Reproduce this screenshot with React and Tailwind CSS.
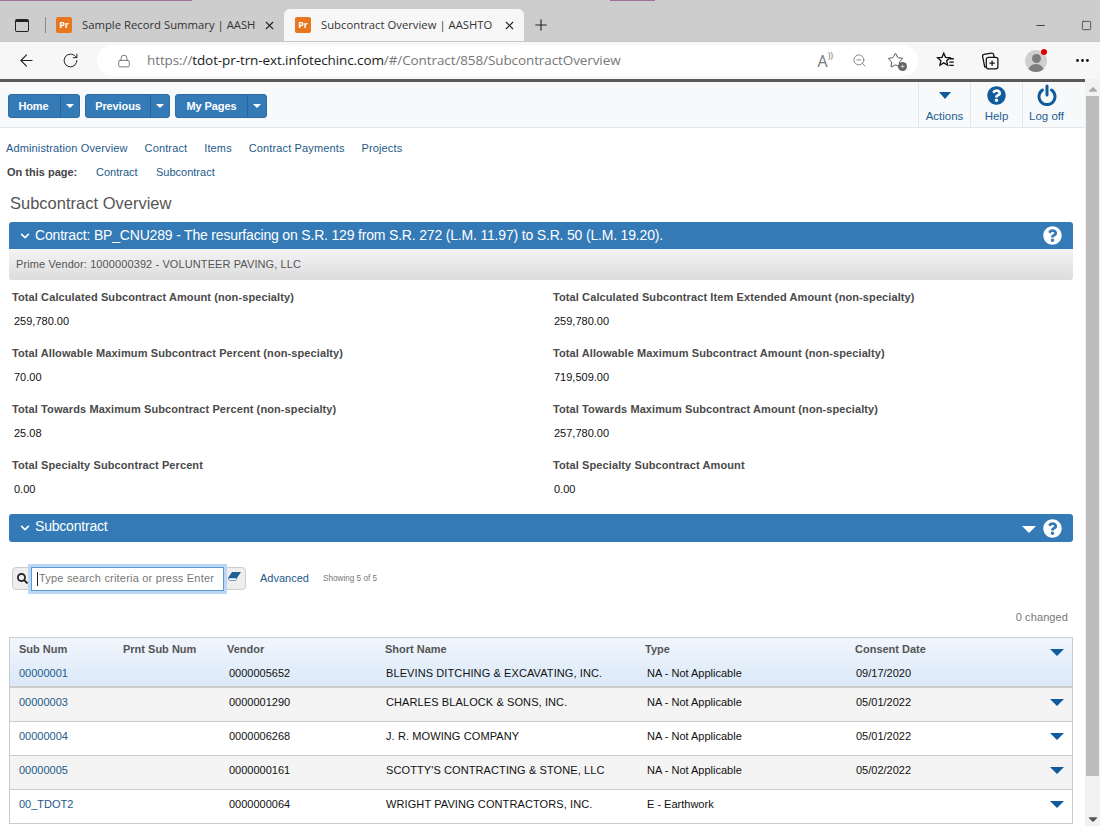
import { ArrowLeft, RotateCw, Lock, ZoomOut, Plus, X, Minus, Square, Star, MoreHorizontal } from "lucide-react";
import { FaQuestionCircle, FaSearch, FaChevronDown, FaCaretDown, FaCaretUp } from "react-icons/fa";

const stats = [
  ["Total Calculated Subcontract Amount (non-specialty)", "259,780.00", "Total Calculated Subcontract Item Extended Amount (non-specialty)", "259,780.00"],
  ["Total Allowable Maximum Subcontract Percent (non-specialty)", "70.00", "Total Allowable Maximum Subcontract Amount (non-specialty)", "719,509.00"],
  ["Total Towards Maximum Subcontract Percent (non-specialty)", "25.08", "Total Towards Maximum Subcontract Amount (non-specialty)", "257,780.00"],
  ["Total Specialty Subcontract Percent", "0.00", "Total Specialty Subcontract Amount", "0.00"],
];

const rows = [
  ["00000003", "0000001290", "CHARLES BLALOCK & SONS, INC.", "NA - Not Applicable", "05/01/2022"],
  ["00000004", "0000006268", "J. R. MOWING COMPANY", "NA - Not Applicable", "05/01/2022"],
  ["00000005", "0000000161", "SCOTTY'S CONTRACTING & STONE, LLC", "NA - Not Applicable", "05/02/2022"],
  ["00_TDOT2", "0000000064", "WRIGHT PAVING CONTRACTORS, INC.", "E - Earthwork", ""],
];

const cols = "grid grid-cols-[104px_104px_158px_260px_210px_1fr_28px]";

const Favicon = () => (
  <div className="w-[16px] h-[16px] shrink-0 rounded-[2px] bg-[#e8751f] text-white text-[9px] font-bold flex items-center justify-center">Pr</div>
);

const SplitButton = ({ label, width }) => (
  <div className="flex h-[24px] rounded-[3px] bg-[#337ab7] border border-[#2e6da4] text-white text-[11px] font-bold tracking-[-0.1px]">
    <div className={`${width} flex items-center justify-center`}>{label}</div>
    <div className="w-[19px] border-l border-[#2a6496] flex items-center justify-center">
      <div className="w-0 h-0 border-x-[4px] border-x-transparent border-t-[4px] border-t-white" />
    </div>
  </div>
);

const Stat = ({ label, value, indent = "pl-[2px]" }) => (
  <div className="h-[56px]">
    <div className="h-[24px] flex items-center font-bold text-[#4a4a4a] tracking-[0.1px]">{label}</div>
    <div className={`h-[24px] flex items-center text-[#111] ${indent}`}>{value}</div>
  </div>
);

const RowArrow = ({ className = "" }) => (
  <div className={`w-0 h-0 ml-[6px] border-x-[7px] border-x-transparent border-t-[7px] border-t-[#0f5b9c] ${className}`} />
);

const App = () => {
  return (
    <div className="w-[1100px] h-[826px] overflow-hidden flex flex-col bg-white text-[11px]" style={{ fontFamily: '"Liberation Sans", Arial, sans-serif' }}>
      {/* browser tabs */}
      <div className="h-[41px] bg-[#cdcdcd] flex flex-col shrink-0">
        <div className="h-px flex">
          <div className="w-[192px] bg-[#a0719a]" />
          <div className="w-[418px]" />
          <div className="w-[45px] bg-[#a0719a]" />
        </div>
        <div className="flex flex-1 items-end" style={{ fontFamily: '"Open Sans", sans-serif' }}>
          <div className="w-[15px] h-[32px]" />
          <div className="h-[32px] w-[30px] flex items-center">
            <div className="w-[14px] h-[13px] border-[1.5px] border-[#222] rounded-[2px] border-t-[3px]" />
          </div>
          <div className="h-[16px] w-px bg-[#888] mb-[8px] mr-[10px]" />
          <div className="w-[228px] h-[32px] flex items-center gap-[10px] text-[11.3px] text-[#333]">
            <Favicon />
            <span className="w-[174px] whitespace-nowrap">Sample Record Summary | AASH</span>
            <X size={13} strokeWidth={2} className="text-[#222] ml-[-3.5px] shrink-0" />
          </div>
          <div className="w-[240px] h-[32px] bg-[#f7f7f7] rounded-t-[6px] flex items-center gap-[10px] pl-[11px] text-[11.3px] text-[#333]">
            <Favicon />
            <span className="w-[173px] whitespace-nowrap">Subcontract Overview | AASHTO</span>
            <X size={13} strokeWidth={2} className="text-[#222] ml-[-1.5px] shrink-0" />
          </div>
          <div className="h-[32px] w-[34px] flex items-center justify-center">
            <Plus size={18} strokeWidth={1.5} className="text-[#222]" />
          </div>
          <div className="flex-1" />
          <div className="h-[32px] w-[66px] flex items-center gap-[34px] text-[#222]">
            <Minus size={13} strokeWidth={1.5} />
            <Square size={11} strokeWidth={1.5} />
          </div>
        </div>
      </div>

      {/* address bar */}
      <div className="h-[38px] bg-[#f7f7f7] flex items-center shrink-0 border-t border-[#c8c8c8]">
        <div className="w-[52px] flex justify-center"><ArrowLeft size={19} strokeWidth={1.4} className="text-[#222]" /></div>
        <div className="w-[36px] flex justify-center"><RotateCw size={17} strokeWidth={1.4} className="text-[#222]" /></div>
        <div className="ml-[9px] w-[821px] h-[31px] bg-white rounded-full flex items-center pl-[20px] text-[13.5px] text-[#777]" style={{ fontFamily: '"Open Sans", sans-serif' }}>
          <Lock size={14} strokeWidth={1.3} className="text-[#555]" />
          <span className="ml-[16px] whitespace-nowrap tracking-[-0.1px]">https://<span className="text-[#222]">tdot-pr-trn-ext.infotechinc.com</span>/#/Contract/858/SubcontractOverview</span>
          <div className="flex-1" />
          <span className="text-[16px] text-[#777] mr-[19px]">A<span className="text-[9px] align-top">))</span></span>
          <ZoomOut size={15} strokeWidth={1.2} className="text-[#666] mr-[20px]" />
          <div className="relative mr-[14px]">
            <Star size={17} strokeWidth={1.3} className="text-[#444]" />
            <div className="absolute right-[-3px] bottom-[-2px] w-[9px] h-[9px] rounded-full bg-[#666] text-white text-[8px] leading-[8px] text-center">+</div>
          </div>
        </div>
        <div className="w-[52px] flex justify-center ml-[2px]">
          <svg width="20" height="20" viewBox="0 0 18 18" fill="none" stroke="#111" strokeWidth="1.2">
            <path d="M7 2l1.600 3.700 4 .4-3 2.700.9 4-3.500-2.100-3.500 2.100.9-4-3-2.700 4-.4z" />
            <path d="M12 7h4M12 10h4M12 13h4" />
          </svg>
        </div>
        <div className="w-[36px] flex justify-center">
          <svg width="19" height="19" viewBox="0 0 18 18" fill="none" stroke="#111" strokeWidth="1.2">
            <rect x="5" y="6" width="11" height="11" rx="2" />
            <path d="M10.500 9v5M8 11.500h5M5 15H3.500L1.500 5q-.2-1.500 1.300-1.800L10 2q1.500-.2 2 1.500L12.500 6" />
          </svg>
        </div>
        <div className="w-[56px] flex justify-center">
          <div className="relative w-[22px] h-[22px]">
            <div className="w-[22px] h-[22px] rounded-full bg-[#cfcfcf] flex flex-col items-center overflow-hidden">
              <div className="w-[9px] h-[9px] rounded-full bg-[#7d7d7d] mt-[4px] shrink-0" />
              <div className="w-[16px] h-[10px] rounded-t-full bg-[#7d7d7d] mt-[1px] shrink-0" />
            </div>
            <div className="absolute right-[0px] top-[-1px] w-[6px] h-[6px] rounded-full bg-[#e00000]" />
          </div>
        </div>
        <div className="flex-1 flex justify-center"><MoreHorizontal size={17} strokeWidth={2} className="text-[#111]" /></div>
      </div>

      <div className="h-[3px] flex shrink-0">
        <div className="w-[1085px] bg-[#5a5a5a]" />
        <div className="flex-1 bg-[#f1f1f1]" />
      </div>

      <div className="flex flex-1 min-h-0">
        {/* page */}
        <div className="w-[1085px] flex flex-col overflow-hidden">
          <div className="h-[46px] shrink-0 bg-[#f7f9fb] border-b border-[#e3e6ea] flex">
            <div className="flex-1 flex items-start gap-[5px] pl-[8px] pt-[12px]">
              <SplitButton label="Home" width="w-[51px] pr-[2px]" />
              <SplitButton label="Previous" width="w-[64px]" />
              <SplitButton label="My Pages" width="w-[71px]" />
            </div>
            <div className="w-[52px] border-l border-[#e3e6ea] flex flex-col items-center text-[#1f5f94] text-[11.5px]">
              <div className="h-[26px] pt-[1px] flex items-center"><div className="w-0 h-0 border-x-[6px] border-x-transparent border-t-[7px] border-t-[#0f5b9c]" /></div>
              <span>Actions</span>
            </div>
            <div className="w-[52px] border-l border-[#e3e6ea] flex flex-col items-center text-[#1f5f94] text-[11.5px]">
              <div className="h-[26px] pt-[1px] flex items-center"><FaQuestionCircle size={19} className="text-[#0f5b9c]" /></div>
              <span>Help</span>
            </div>
            <div className="w-[63px] pr-[15px] border-l border-[#e3e6ea] flex flex-col items-center text-[#1f5f94] text-[11.5px]">
              <div className="h-[26px] flex items-center">
                <svg width="20" height="22" viewBox="0 0 20 22" fill="none" stroke="#0f5b9c" strokeWidth="3" strokeLinecap="round">
                  <path d="M10 2v9M5.500 6a8 8 0 1 0 9 0" />
                </svg>
              </div>
              <span>Log off</span>
            </div>
          </div>

          <div className="h-[37px] shrink-0 flex items-end pb-[9px] pl-[6px] gap-[17px] text-[#1d5a8a] tracking-[0.13px]">
            <span>Administration Overview</span>
            <span>Contract</span>
            <span>Items</span>
            <span>Contract Payments</span>
            <span>Projects</span>
          </div>
          <div className="h-[14px] shrink-0 flex items-center pl-[7px] text-[#1d5a8a]">
            <span className="w-[89px] font-bold text-[#444]">On this page:</span>
            <span className="w-[60px]">Contract</span>
            <span>Subcontract</span>
          </div>

          <div className="h-[43px] shrink-0 pl-[10px] pt-[14px] text-[16.5px] text-[#555] leading-[20px]">Subcontract Overview</div>

          <div className="ml-[9px] w-[1064px] shrink-0">
            <div className="h-[27px] bg-[#337ab7] rounded-t-[3px] flex items-center pl-[11px] pr-[11px] text-white text-[14px]">
              <FaChevronDown size={10} className="mr-[5px]" />
              <span className="flex-1 whitespace-nowrap tracking-[-0.18px]">Contract: BP_CNU289 - The resurfacing on S.R. 129 from S.R. 272 (L.M. 11.97) to S.R. 50 (L.M. 19.20).</span>
              <FaQuestionCircle size={19} />
            </div>
            <div className="h-[31px] pb-[1px] bg-gradient-to-b from-[#f4f4f4] to-[#dcdcdc] rounded-b-[3px] flex items-center pl-[7px] text-[#555] tracking-[0.1px]">
              Prime Vendor: 1000000392 - VOLUNTEER PAVING, LLC
            </div>
          </div>

          <div className="shrink-0 pl-[12px] pt-[5px] grid grid-cols-[541px_1fr]">
            {stats.map((s) => (
              <div key={s[0]} className="contents">
                <Stat label={s[0]} value={s[1]} />
                <Stat label={s[2]} value={s[3]} indent="pl-px" />
              </div>
            ))}
          </div>

          <div className="mt-[5px] ml-[9px] w-[1064px] h-[28px] shrink-0 bg-[#337ab7] rounded-[3px] flex items-center pl-[11px] pr-[11px] text-white text-[14px]">
            <FaChevronDown size={10} className="mr-[5px]" />
            <span className="flex-1 tracking-[-0.2px] pb-[3px]">Subcontract</span>
            <div className="w-0 h-0 mr-[7px] mt-[2px] border-x-[7px] border-x-transparent border-t-[7px] border-t-white" />
            <FaQuestionCircle size={19} />
          </div>

          <div className="mt-[25px] h-[23px] shrink-0 flex items-center pl-[12px]">
            <div className="w-[234px] h-[23px] bg-[#eee] border border-[#ccc] rounded-[4px] flex items-center">
              <div className="w-[18px] flex justify-center"><FaSearch size={11} className="text-[#222]" /></div>
              <div className="w-[193px] h-[24px] bg-white border border-[#5b9bd5] shadow-[0_0_0_3px_#bcd6f5] flex items-center pl-[5px] text-[#777]">
                <span className="w-px h-[14px] bg-[#222] mr-[1px]" />
                <span className="tracking-[0.2px] whitespace-nowrap">Type search criteria or press Enter</span>
              </div>
              <div className="flex-1 flex justify-center pb-[5px]">
                <svg width="13" height="9" viewBox="0 0 13 9">
                  <path d="M4 0h9L9 6H0z" fill="#1f5f94" />
                  <path d="M0 6h9l-1.500 2.500H1.500z" fill="#fff" stroke="#1f5f94" strokeWidth="0.6" />
                </svg>
              </div>
            </div>
            <span className="ml-[14px] text-[#1d5a8a]">Advanced</span>
            <span className="ml-[14px] text-[8.2px] text-[#777] pt-[2px]">Showing 5 of 5</span>
          </div>

          <div className="h-[47px] shrink-0 pr-[17px] pt-[19px] text-right text-[#777] tracking-[0.1px]">0 changed</div>

          <div className="ml-[9px] w-[1064px] shrink-0 border border-[#ccc] border-b-0">
            <div className="h-[50px] border-b-2 border-[#ccc] bg-gradient-to-b from-[#f0f6fd] to-[#dbe9f8]">
              <div className={`${cols} h-[23px] pb-[1px] items-center pl-[9px] font-bold text-[#555]`}>
                <span>Sub Num</span>
                <span>Prnt Sub Num</span>
                <span>Vendor</span>
                <span>Short Name</span>
                <span>Type</span>
                <span>Consent Date</span>
                <RowArrow className="mt-[6px]" />
              </div>
              <div className={`${cols} h-[25px] items-center pl-[9px] text-[#111]`}>
                <span className="text-[#1d5a8a]">00000001</span>
                <span />
                <span className="pl-[2px]">0000005652</span>
                <span className="pl-px whitespace-nowrap tracking-[0.1px]">BLEVINS DITCHING &amp; EXCAVATING, INC.</span>
                <span className="pl-[2px]">NA - Not Applicable</span>
                <span className="pl-px">09/17/2020</span>
                <span />
              </div>
            </div>
            {rows.map((r, i) => (
              <div key={r[0]} className={`${cols} h-[34px] items-center pl-[9px] pb-[5px] border-b border-[#ccc] text-[#111] ${i % 2 === 0 ? "bg-[#f4f4f4]" : "bg-white"}`}>
                <span className="text-[#1d5a8a]">{r[0]}</span>
                <span />
                <span className="pl-[2px]">{r[1]}</span>
                <span className="pl-px whitespace-nowrap tracking-[0.1px]">{r[2]}</span>
                <span className="pl-[2px]">{r[3]}</span>
                <span className="pl-px">{r[4]}</span>
                <RowArrow />
              </div>
            ))}
          </div>
        </div>

        {/* scrollbar */}
        <div className="flex-1 bg-[#f1f1f1] flex flex-col items-center">
          <FaCaretUp size={10} className="text-[#aaa] h-[14px]" />
          <div className="w-[13px] h-[680px] bg-[#bcbcbc]" />
          <div className="flex-1" />
          <FaCaretDown size={10} className="text-[#555] h-[14px]" />
        </div>
      </div>
    </div>
  );
};

export default App;
